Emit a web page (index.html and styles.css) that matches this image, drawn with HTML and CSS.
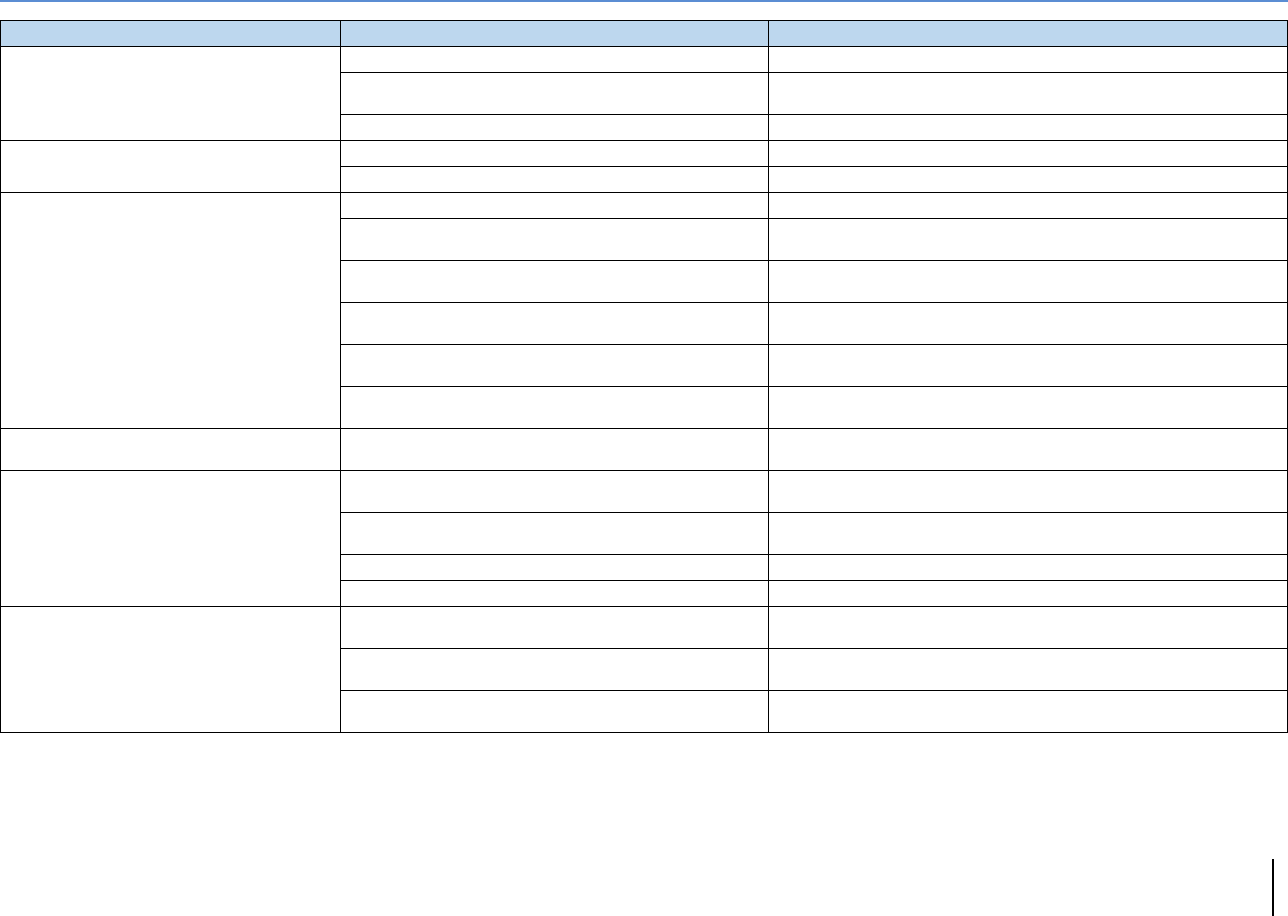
FILE: index.html
```html
<!DOCTYPE html>
<html lang="en">
<head>
<meta charset="utf-8">
<title>Table</title>
<link rel="stylesheet" href="styles.css">
</head>
<body>
<div class="page">
  <div class="top-rule"></div>
  <table class="grid">
    <colgroup>
      <col class="c1"><col class="c2"><col class="c3">
    </colgroup>
    <thead>
      <tr class="s"><th></th><th></th><th></th></tr>
    </thead>
    <tbody>
      <tr class="s"><td rowspan="3"></td><td></td><td></td></tr>
      <tr class="d"><td></td><td></td></tr>
      <tr class="s"><td></td><td></td></tr>

      <tr class="s"><td rowspan="2"></td><td></td><td></td></tr>
      <tr class="s"><td></td><td></td></tr>

      <tr class="s"><td rowspan="6"></td><td></td><td></td></tr>
      <tr class="d"><td></td><td></td></tr>
      <tr class="d"><td></td><td></td></tr>
      <tr class="d"><td></td><td></td></tr>
      <tr class="d"><td></td><td></td></tr>
      <tr class="d"><td></td><td></td></tr>

      <tr class="d"><td></td><td></td><td></td></tr>

      <tr class="d"><td rowspan="4"></td><td></td><td></td></tr>
      <tr class="d"><td></td><td></td></tr>
      <tr class="s"><td></td><td></td></tr>
      <tr class="s"><td></td><td></td></tr>

      <tr class="d"><td rowspan="3"></td><td></td><td></td></tr>
      <tr class="d"><td></td><td></td></tr>
      <tr class="d"><td></td><td></td></tr>
    </tbody>
  </table>
  <div class="footer">
    <div class="page-mark"></div>
  </div>
</div>
</body>
</html>
```

FILE: styles.css
```css
html, body {
  margin: 0;
  padding: 0;
  background: #ffffff;
  font-family: "Liberation Sans", Arial, sans-serif;
}

.page {
  width: 1288px;
  height: 916px;
  overflow: hidden;
}

.top-rule {
  height: 2px;
  background: #5b8dd3;
}

.grid {
  margin-top: 18px;
  border-collapse: collapse;
  table-layout: fixed;
  width: 1287px;
}

.grid .c1 { width: 340px; }
.grid .c2 { width: 428px; }
.grid .c3 { width: 519px; }

.grid th,
.grid td {
  border: 1px solid #000000;
  padding: 0;
}

.grid th {
  background: #bdd7ee;
}

.grid tr.s { height: 26px; }
.grid tr.d { height: 42px; }

.footer {
  display: flex;
  justify-content: flex-end;
  padding-right: 14px;
  margin-top: 126px;
}

.page-mark {
  width: 2px;
  height: 57px;
  background: #000000;
}
```
